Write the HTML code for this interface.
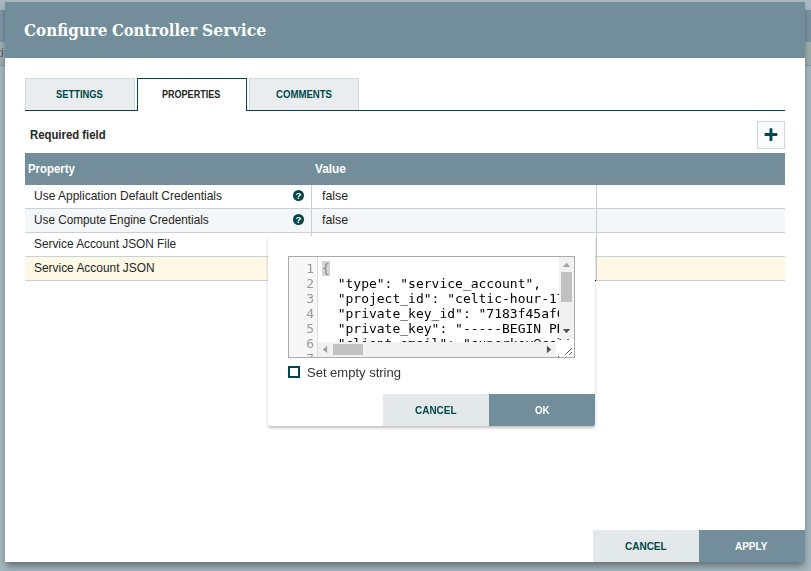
<!DOCTYPE html>
<html lang="en">
<head>
<meta charset="utf-8">
<title>Configure Controller Service</title>
<style>
html,body{margin:0;padding:0;}
body{width:811px;height:571px;overflow:hidden;position:relative;background:#a8b9c1;font-family:"Liberation Sans",sans-serif;font-size:13px;color:#262626;}
.abs{position:absolute;}
.t{position:absolute;white-space:nowrap;transform-origin:0 50%;line-height:16px;height:16px;}
/* backdrop */
#bg-top{left:0;top:10px;width:811px;height:32px;background:#7a95a3;}
#bg-mid{left:0;top:42px;width:811px;height:23px;background:#9eaeaf;}
#bg-line{left:0;top:65px;width:811px;height:1px;background:#8199aa;}
#bg-low{left:0;top:66px;width:811px;height:505px;background:#a5b7bf;}
/* dialog */
#dialog{left:5px;top:2px;width:800px;height:560px;background:#fff;box-shadow:0 5px 7px -1px rgba(0,0,0,.4);}
#header{left:0;top:0;width:800px;height:56px;background:#728e9b;}
#title{left:19px;top:17px;font-family:"DejaVu Serif","Liberation Serif",serif;font-weight:bold;font-stretch:normal;font-size:17px;color:#fff;line-height:22px;height:22px;}
.tw{position:absolute;top:0;transform-origin:0 50%;}
.tab{position:absolute;top:76px;height:31px;width:108px;border:1px solid #ccdadb;border-bottom:none;background:#e9edf0;}
.tab.sel{border-color:#004849;background:#fff;height:32px;}
#tabline{left:20px;top:108px;width:760px;height:1px;background:#004849;}
.tabtxt{font-weight:bold;font-size:11px;color:#004849;}
#plus{left:752px;top:119px;width:26px;height:26px;border:1px solid #ccdadb;background:#fafbfc;}
#thead{left:20px;top:151px;width:760px;height:32px;background:#728e9b;}
.th{font-weight:bold;color:#fff;font-size:12px;}
.row{position:absolute;left:20px;width:760px;height:23px;border-bottom:1px solid #c7d2d7;background:#fff;}
.row.odd{background:#f4f6f7;}
.row.hl{background:#fef8e6;}
.vline{position:absolute;top:183px;width:1px;height:96px;background:#c7d2d7;}
.help{position:absolute;left:288px;top:188px;width:11px;height:11px;}
.btn{position:absolute;height:32px;width:106px;background:#728e9b;}
.btn.sec{background:#e3e8eb;}
.btntxt{font-weight:bold;font-size:11px;color:#fff;}
.btn.sec .btntxt{color:#004849;}
/* popup editor */
#popup{left:263px;top:234px;width:327px;height:190px;background:#fff;border-radius:2px;box-shadow:0 2px 3px rgba(0,0,0,.25);will-change:transform;}
#editor{left:20px;top:20px;width:285px;height:100px;border:1px solid #aaa;background:#fff;overflow:hidden;}
#gutter{left:0;top:0;width:28px;height:100px;background:#f7f7f7;border-right:1px solid #ddd;}
.ln{position:absolute;right:3px;width:24px;text-align:right;font-family:"DejaVu Sans Mono","Liberation Mono",monospace;font-size:13px;line-height:15px;height:15px;color:#999;}
#code{left:29px;top:0;width:256px;height:85px;overflow:hidden;}
.cl{position:absolute;left:4px;white-space:pre;font-family:"DejaVu Sans Mono","Liberation Mono",monospace;font-size:13px;line-height:15px;height:15px;color:#000;}
#vtrack{left:270px;top:0;width:15px;height:82px;background:#f1f1f1;}
#htrack{left:29px;top:85px;width:238px;height:15px;background:#f1f1f1;}
#filler{left:267px;top:83px;width:18px;height:17px;background:#fff;}
.thumb{position:absolute;background:#c1c1c1;}
#cb{left:20px;top:130px;width:8px;height:8px;border:2px solid #004849;background:#fff;}
#cbl{left:39px;top:128.5px;color:#333;}
</style>
</head>
<body>
<div class="abs" id="bg-top"></div>
<div class="abs" id="bg-mid"></div>
<div class="abs" id="bg-line"></div>
<div class="abs" id="bg-low"></div>
<span class="t" id="bgtxt" style="left:-2.6px;top:45px;color:#57526a;font-size:13px;">ti</span>
<div class="abs" id="dialog">
  <div class="abs" id="header"><span class="t" id="title"><span class="tw" id="tw1" style="left:0.3px;transform:scaleX(0.891);">Configure</span> <span class="tw" id="tw2" style="left:87.6px;transform:scaleX(0.869);">Controller</span> <span class="tw" id="tw3" style="left:178.200px;transform:scaleX(0.923);">Service</span></span></div>
  <div class="abs" id="tabline"></div>
  <div class="tab" style="left:20px;"><span class="t tabtxt" id="tab1" style="transform:scaleX(0.852);left:29.7px;top:7px;">SETTINGS</span></div>
  <div class="tab sel" style="left:132px;"><span class="t tabtxt" id="tab2" style="transform:scaleX(0.822);left:24.3px;top:7px;color:#262626;">PROPERTIES</span></div>
  <div class="tab" style="left:244px;"><span class="t tabtxt" id="tab3" style="transform:scaleX(0.873);left:25.6px;top:7px;">COMMENTS</span></div>
  <span class="t" id="req" style="transform:scaleX(0.945);left:25.3px;top:124.5px;font-weight:bold;font-size:12px;">Required field</span>
  <div class="abs" id="plus">
    <svg width="26" height="26" viewBox="0 0 26 26" style="position:absolute;left:0;top:0"><rect x="6.500" y="11.100" width="12.900" height="2.900" rx="0.8" fill="#004849"/><rect x="11.500" y="6.200" width="2.900" height="12.900" rx="0.8" fill="#004849"/></svg>
  </div>
  <div class="abs" id="thead">
    <span class="t th" id="thp" style="transform:scaleX(0.95);left:3.1px;top:8px;">Property</span>
    <span class="t th" id="thv" style="transform:scaleX(0.987);left:289.6px;top:8px;">Value</span>
  </div>
  <div class="row" style="top:183px;"><span class="t" id="r1" style="transform:scaleX(0.9227);left:9.4px;top:3px;">Use Application Default Credentials</span><span class="t" id="v1" style="transform:scaleX(0.955);left:296.6px;top:3px;">false</span></div>
  <div class="row odd" style="top:207px;"><span class="t" id="r2" style="transform:scaleX(0.9057);left:9.4px;top:3px;">Use Compute Engine Credentials</span><span class="t" id="v2" style="transform:scaleX(0.955);left:296.6px;top:3px;">false</span></div>
  <div class="row" style="top:231px;"><span class="t" id="r3" style="transform:scaleX(0.911);left:9.4px;top:3px;">Service Account JSON File</span></div>
  <div class="row hl" style="top:255px;"><span class="t" id="r4" style="transform:scaleX(0.917);left:9.4px;top:3px;">Service Account JSON</span></div>
  <div class="vline" style="left:306px;"></div>
  <div class="vline" style="left:591px;"></div>
  <svg class="help" style="top:188px;" viewBox="0 0 11 11"><circle cx="5.5" cy="5.5" r="5.5" fill="#004849"/><text x="5.55" y="8.900" text-anchor="middle" font-family="Liberation Sans, sans-serif" font-weight="bold" font-size="9.7" fill="#fff">?</text></svg>
  <svg class="help" style="top:212px;" viewBox="0 0 11 11"><circle cx="5.5" cy="5.5" r="5.5" fill="#004849"/><text x="5.55" y="8.900" text-anchor="middle" font-family="Liberation Sans, sans-serif" font-weight="bold" font-size="9.7" fill="#fff">?</text></svg>

  <div class="abs" style="left:590px;top:278px;width:1px;height:1px;background:#111;"></div>
  <div class="abs" id="popup">
    <div class="abs" id="editor">
      <div class="abs" id="code">
        <span class="abs" style="left:4px;top:4px;width:7.83px;height:15px;background:#d4d4d4;"></span>
        <span class="cl" style="top:4px;color:#888;">{</span>
        <span class="cl" style="top:19px;">  "type": "service_account",</span>
        <span class="cl" style="top:34px;">  "project_id": "celtic-hour-171417",</span>
        <span class="cl" style="top:49px;">  "private_key_id": "7183f45af0c2b1d9e6a4",</span>
        <span class="cl" style="top:64px;">  "private_key": "-----BEGIN PRIVATE KEY-----",</span>
        <span class="cl" style="top:79px;">  "client_email": "superkey@celtic-hour-171417.iam.gserviceaccount.com",</span>
      </div>
      <div class="abs" id="gutter">
        <span class="ln" style="top:4px;">1</span>
        <span class="ln" style="top:19px;">2</span>
        <span class="ln" style="top:34px;">3</span>
        <span class="ln" style="top:49px;">4</span>
        <span class="ln" style="top:64px;">5</span>
        <span class="ln" style="top:79px;">6</span>
        <span class="ln" style="top:94px;">7</span>
      </div>
      <div class="abs" id="filler"></div>
      <div class="abs" id="vtrack">
        <div class="thumb" style="left:2px;top:15px;width:11px;height:30px;"></div>
        <svg class="abs" style="left:0;top:0" width="15" height="82" viewBox="0 0 15 82"><path d="M3.800 10.100L7.500 5.800L11.200 10.100Z" fill="#a3a3a3"/><path d="M3.800 71.900L11.200 71.900L7.500 76.200Z" fill="#505050"/></svg>
      </div>
      <div class="abs" id="htrack">
        <div class="thumb" style="left:15px;top:2px;width:30px;height:11px;"></div>
        <svg class="abs" style="left:0;top:0" width="238" height="15" viewBox="0 0 238 15"><path d="M9.100 3.800L9.100 11.200L4.800 7.500Z" fill="#a3a3a3"/><path d="M228.900 3.800L233.200 7.500L228.900 11.200Z" fill="#505050"/></svg>
      </div>
      <svg class="abs" style="left:274px;top:89px;" width="10" height="10" viewBox="0 0 10 10"><path d="M2.200 8.800L9 2M6.200 8.800L9 6" stroke="#5a5a5a" stroke-width="1" fill="none"/></svg>
    </div>
    <div class="abs" style="left:290px;top:120px;width:1px;height:1px;background:#111;"></div>
    <div class="abs" id="cb"></div>
    <span class="t" id="cbl">Set empty string</span>
    <div class="btn sec" style="left:115px;top:158px;"><span class="t btntxt" id="pc" style="transform:scaleX(0.905);left:32.3px;top:8px;">CANCEL</span></div>
    <div class="btn" style="left:221px;top:158px;border-bottom-right-radius:2px;"><span class="t btntxt" id="pok" style="transform:scaleX(0.8875);left:46px;top:8px;">OK</span></div>
  </div>

  <div class="btn sec" style="left:588px;top:528px;"><span class="t btntxt" id="mc" style="transform:scaleX(0.908);left:31.800px;top:8px;">CANCEL</span></div>
  <div class="btn" style="left:694px;top:528px;"><span class="t btntxt" id="ma" style="transform:scaleX(0.908);left:36.200px;top:8px;">APPLY</span></div>
</div>
</body>
</html>
